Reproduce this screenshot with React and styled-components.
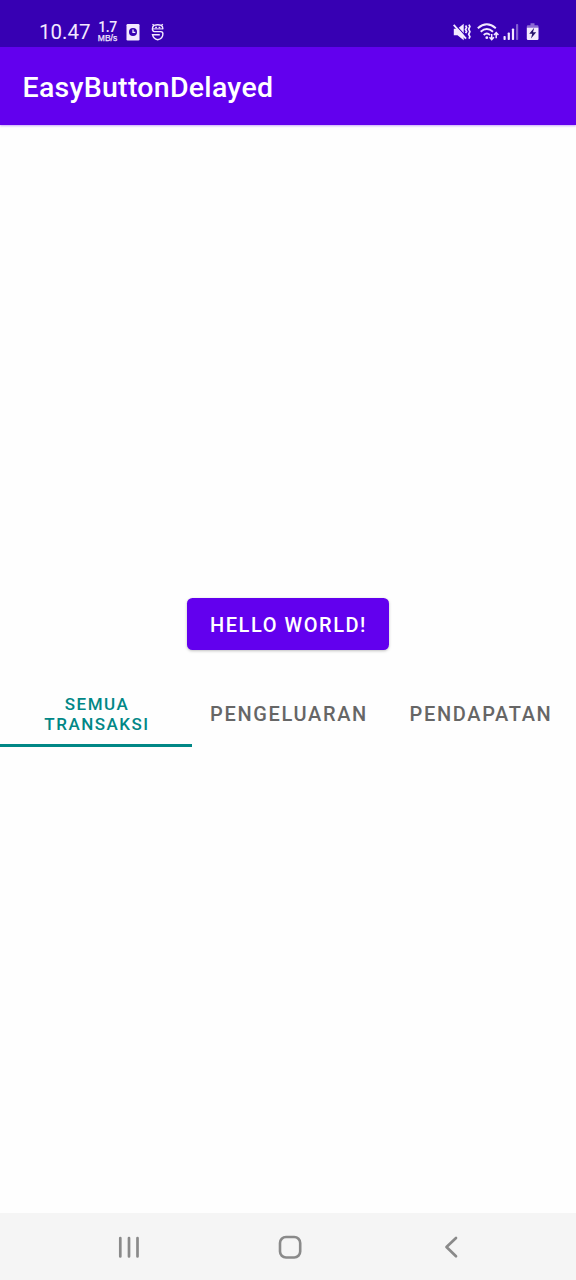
import React from "react";
import styled, { createGlobalStyle } from "styled-components";

const GlobalStyle = createGlobalStyle`
  * { box-sizing: border-box; }
  body { margin: 0; background: #fff; font-family: Roboto, "Noto Sans", sans-serif; }
`;

const Screen = styled.div`
  display: flex;
  flex-direction: column;
  width: 576px;
  height: 1280px;
  background: #fefefe;
  overflow: hidden;
`;

const StatusBar = styled.header`
  flex: none;
  display: flex;
  justify-content: space-between;
  height: 47px;
  padding: 17px 36px 0 39px;
  background: #3700b3;
  color: #f3e9ff;
`;

const StatusGroup = styled.div`
  display: flex;
  align-items: center;
  height: 30px;
  svg { display: block; flex: none; }
`;

const Clock = styled.span`
  width: 58px;
  font-size: 20.5px;
  line-height: 30px;
  letter-spacing: 0;
`;

const NetSpeed = styled.div`
  display: flex;
  flex-direction: column;
  align-items: center;
  width: 21px;
  margin-right: 7.5px;
  font-family: "Liberation Sans", sans-serif;
`;

const SpeedValue = styled.span`
  font-family: Roboto, sans-serif;
  font-size: 14px;
  font-weight: 500;
  line-height: 13px;
  letter-spacing: -0.4px;
`;

const SpeedUnit = styled.span`
  font-size: 8.5px;
  line-height: 9px;
  font-weight: 400;
  -webkit-text-stroke: 0.25px currentColor;
`;

const AppBar = styled.div`
  flex: none;
  display: flex;
  align-items: center;
  height: 78px;
  padding: 3px 22.5px 0;
  background: #6200ee;
  box-shadow: 0 1px 2px rgba(98, 0, 238, 0.35);
`;

const Title = styled.h1`
  margin: 0;
  color: #fff;
  font-size: 28.5px;
  font-weight: 500;
  line-height: 34px;
  letter-spacing: 0.28px;
`;

const Content = styled.main`
  flex: 1;
  display: flex;
  flex-direction: column;
  align-items: center;
  padding-top: 473px;
`;

const Button = styled.button`
  flex: none;
  width: 202px;
  height: 52px;
  margin: 0 0 29px;
  padding: 1px 0 0 1px;
  border: 0;
  border-radius: 5.5px;
  background: #6200ee;
  color: #fff;
  box-shadow: 0 1px 3px rgba(0, 0, 0, 0.25);
  font: 500 20px/24px Roboto, sans-serif;
  letter-spacing: 1.55px;
`;

const Tabs = styled.div`
  display: grid;
  grid-template-columns: repeat(3, 1fr);
  width: 100%;
  height: 68px;
`;

const Tab = styled.div`
  display: flex;
  align-items: center;
  justify-content: center;
  padding: ${(p) => (p.$active ? "5px 40px 0 42px" : "5px 0 0 2px")};
  border-bottom: 3px solid ${(p) => (p.$active ? "#018786" : "transparent")};
  color: ${(p) => (p.$active ? "#018786" : "#666")};
  font-size: ${(p) => (p.$active ? "17px" : "20px")};
  font-weight: 500;
  line-height: 20px;
  letter-spacing: ${(p) => (p.$active ? "1.5px" : "1.64px")};
  text-align: center;
`;

const NavBar = styled.nav`
  flex: none;
  display: flex;
  align-items: center;
  justify-content: center;
  gap: 131px;
  height: 67px;
  padding: 1px 0 0 4px;
  background: #f5f5f5;
  color: #8a8a8a;
  svg { display: block; }
`;

const MaskSvg = styled.svg`
  margin-left: 11px;
`;

const WifiSvg = styled.svg`
  margin-left: 6px;
`;

const SignalSvg = styled.svg`
  margin-left: 3px;
`;

const BatterySvg = styled.svg`
  margin-left: 7px;
`;

function ClockCardIcon() {
  return (
    <svg width="14" height="20" viewBox="0 0 14 20">
      <rect x="0.5" y="2" width="13" height="16.5" rx="1.2" fill="currentColor" />
      <circle cx="7" cy="10" r="4" fill="#3700b3" />
      <path d="M7 7.5v2.8h2.3" fill="none" stroke="currentColor" strokeWidth="1.3" />
    </svg>
  );
}

function MaskIcon() {
  return (
    <MaskSvg width="14" height="18" viewBox="0 0 14 18" fill="none" stroke="currentColor" strokeWidth="1.4">
      <path d="M1.5 1.2 3 2.6M11.8 1.2l-1.5 1.4M3 2.4q3.7-1.2 7.3 0 1.6 1.2 1.6 3.8" />
      <path d="M3 2.4Q1.4 3.8 1.4 6q0 2.4 2 2.6h6.5q2 .2 2 2.2 0 5-5.2 6-4.3-.8-5.2-5.1h7.3" />
      <path d="M1.8 5.9h10" strokeWidth="1" />
      <path d="M4.2 4.5h1.7M7.6 4.5h1.7" strokeWidth="1.3" />
    </MaskSvg>
  );
}

function MuteIcon() {
  return (
    <svg width="18" height="18" viewBox="0 0 18 18">
      <path d="M.8 5.8h3.7L10.7.8v16.4l-6.2-5H.8z" fill="currentColor" />
      <path d="M1.5 1 14 14.6" stroke="#3700b3" strokeWidth="1.3" />
      <path d="M.7 1.8 13 15.6" stroke="currentColor" strokeWidth="1.8" />
      <path d="m12.6 2.5 1 1.9-1.1 2 1.1 2-1 1.8M15.9 1.6l1 2-1.2 2.5 1.2 2.6-1.2 2.6 1.2 2.5-1 1.8" stroke="currentColor" strokeWidth="1.7" fill="none" />
    </svg>
  );
}

function WifiIcon() {
  return (
    <WifiSvg width="23" height="20" viewBox="0 0 23 20" fill="none" stroke="currentColor" strokeWidth="1.9">
      <path d="M.8 6.2q9-7.8 18 0M3.7 9.7q6.1-5.2 12.3 0M6.7 12.9q3.1-2.6 6.3 0" />
      <circle cx="9.8" cy="15.7" r="1.4" fill="currentColor" stroke="none" />
      <path d="M14.7 12v5.6m-2.2-2.4 2.2 2.4 2.2-2.4M19.2 16.2v-5.6M17 13l2.2-2.4 2.2 2.4" strokeWidth="1.5" />
    </WifiSvg>
  );
}

function SignalIcon() {
  return (
    <SignalSvg width="16" height="18" viewBox="0 0 16 18" fill="currentColor">
      <rect x="0.5" y="13" width="2.2" height="4" rx=".8" />
      <rect x="4.7" y="9.5" width="2.2" height="7.5" rx=".8" />
      <rect x="8.9" y="5.5" width="2.2" height="11.5" rx=".8" />
      <rect x="13" y="1" width="2.2" height="16" rx=".8" opacity=".4" />
    </SignalSvg>
  );
}

function BatteryIcon() {
  return (
    <BatterySvg width="14" height="18" viewBox="0 0 14 18">
      <path d="M4.5.3h4v2h2.8q1.2 0 1.2 1.2V5H.8V3.5q0-1.2 1.2-1.2h2.5z" fill="currentColor" opacity=".45" />
      <path d="M.8 4.8h11.7v11q0 1.3-1.2 1.3H2q-1.2 0-1.2-1.3z" fill="currentColor" />
      <path d="M8.2 4.8 3.2 10.8h3l-1.2 4.7L10.2 9.2H7z" fill="#25106b" />
    </BatterySvg>
  );
}

export default function App() {
  return (
    <>
      <GlobalStyle />
      <Screen>
        <StatusBar>
          <StatusGroup>
            <Clock>10.47</Clock>
            <NetSpeed>
              <SpeedValue>1.7</SpeedValue>
              <SpeedUnit>MB/s</SpeedUnit>
            </NetSpeed>
            <ClockCardIcon />
            <MaskIcon />
          </StatusGroup>
          <StatusGroup>
            <MuteIcon />
            <WifiIcon />
            <SignalIcon />
            <BatteryIcon />
          </StatusGroup>
        </StatusBar>
        <AppBar>
          <Title>EasyButtonDelayed</Title>
        </AppBar>
        <Content>
          <Button>HELLO WORLD!</Button>
          <Tabs>
            <Tab $active>SEMUA TRANSAKSI</Tab>
            <Tab>PENGELUARAN</Tab>
            <Tab>PENDAPATAN</Tab>
          </Tabs>
        </Content>
        <NavBar>
          <svg width="30" height="30" viewBox="0 0 30 30" stroke="currentColor" strokeWidth="2.7" strokeLinecap="round">
            <path d="M6.3 6v18.5M15 6v18.5M23.5 6v18.5" />
          </svg>
          <svg width="30" height="30" viewBox="0 0 30 30" fill="none" stroke="currentColor" strokeWidth="2.6">
            <rect x="5" y="5" width="20.2" height="20.5" rx="6" />
          </svg>
          <svg width="30" height="30" viewBox="0 0 30 30" fill="none" stroke="currentColor" strokeWidth="2.7" strokeLinecap="round" strokeLinejoin="round">
            <path d="M20 6 10.5 15l9.5 9.3" />
          </svg>
        </NavBar>
      </Screen>
    </>
  );
}
